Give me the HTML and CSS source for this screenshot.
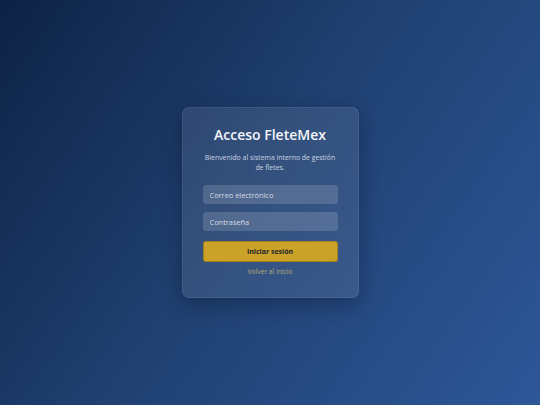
FILE: index.html
```html
<!DOCTYPE html>
<html lang="es">
<head>
<meta charset="utf-8">
<title>Acceso FleteMex</title>
<link rel="stylesheet" href="styles.css">
</head>
<body>
<main class="page">
  <form class="card">
    <h1 class="title">Acceso FleteMex</h1>
    <p class="subtitle">Bienvenido al sistema interno de gestión de fletes.</p>
    <input class="field" type="email" placeholder="Correo electrónico">
    <input class="field field-pass" type="password" placeholder="Contraseña">
    <button class="btn" type="button">Iniciar sesión</button>
    <a class="back" href="#">Volver al inicio</a>
  </form>
</main>
</body>
</html>
```
FILE: styles.css
```css
* { box-sizing: border-box; }
html, body { margin: 0; height: 100%; }
body {
  font-family: "Open Sans", "DejaVu Sans", sans-serif;
  background: linear-gradient(125deg, #0d2345 0%, #1f3f6f 45%, #2e5799 100%);
  color: #fff;
}
.page {
  height: 100%;
  display: flex;
  align-items: center;
  justify-content: center;
}
.card {
  width: 177px;
  height: 191px;
  padding: 18px 20px 20px;
  background: rgba(255, 255, 255, 0.09);
  border: 1px solid rgba(255, 255, 255, 0.07);
  border-radius: 7px;
  box-shadow: 0 6px 20px rgba(5, 15, 35, 0.35);
  display: flex;
  flex-direction: column;
  align-items: stretch;
}
.title {
  margin: 0;
  font-size: 14px;
  line-height: 18px;
  font-weight: 600;
  text-align: center;
  color: #f4f6fa;
}
.subtitle {
  margin: 9px 0 0;
  font-size: 6.9px;
  line-height: 9.5px;
  text-align: center;
  color: #c9d3e3;
}
.field {
  margin-top: 13px;
  height: 20px;
  width: 100%;
  border: none;
  border-radius: 3px;
  background: rgba(255, 255, 255, 0.15);
  padding: 0 7px;
  font-family: inherit;
  font-size: 7.4px;
  color: #fff;
  outline: none;
}
.field::placeholder { color: #d3dbe8; }
.field-pass { margin-top: 7.5px; }
.btn {
  margin-top: 10px;
  height: 20.5px;
  width: 100%;
  border: 1px solid rgba(120, 95, 20, 0.5);
  border-radius: 3px;
  background: #c9a227;
  color: #1f2430;
  font-family: inherit;
  font-size: 7px;
  font-weight: 700;
  padding: 0;
}
.back {
  margin-top: 5.5px;
  font-size: 6.7px;
  line-height: 10px;
  text-align: center;
  color: #b6a977;
  text-decoration: none;
}
```
